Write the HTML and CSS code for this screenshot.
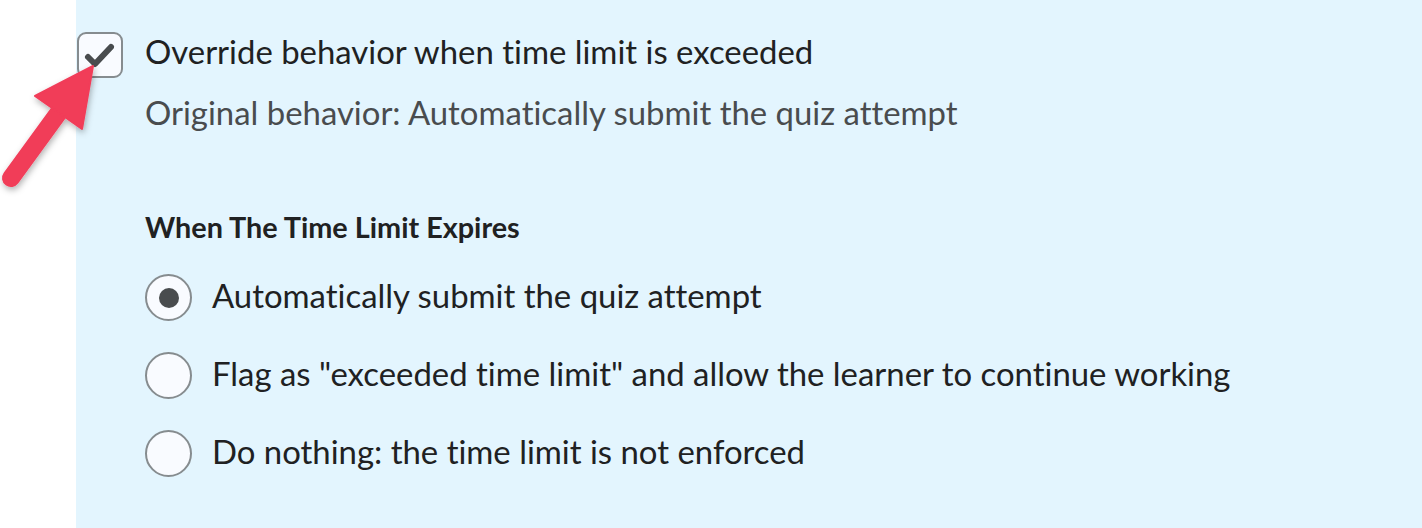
FILE: index.html
```html
<!DOCTYPE html>
<html>
<head>
<meta charset="utf-8">
<link rel="stylesheet" href="styles.css">
</head>
<body>
<div class="panel">
  <label class="check-row">
    <span class="checkbox">
      <svg viewBox="0 0 42 42" width="42" height="42"><path d="M9 23 L16 30 L32 13" fill="none" stroke="#494c4e" stroke-width="6" stroke-linecap="round" stroke-linejoin="round"/></svg>
    </span>
    <span class="check-label">Override behavior when time limit is exceeded</span>
  </label>
  <div class="original">Original behavior: Automatically submit the quiz attempt</div>
  <div class="heading">When The Time Limit Expires</div>
  <div class="radios">
    <label class="radio-row"><span class="radio checked"></span><span class="radio-label">Automatically submit the quiz attempt</span></label>
    <label class="radio-row"><span class="radio"></span><span class="radio-label">Flag as "exceeded time limit" and allow the learner to continue working</span></label>
    <label class="radio-row"><span class="radio"></span><span class="radio-label">Do nothing: the time limit is not enforced</span></label>
  </div>
</div>
<svg class="arrow" viewBox="0 0 120 200" width="120" height="200">
  <defs>
    <filter id="sh" x="-30%" y="-30%" width="160%" height="160%">
      <feDropShadow dx="1" dy="3" stdDeviation="3" flood-color="#000" flood-opacity="0.3"/>
    </filter>
  </defs>
  <g filter="url(#sh)" fill="#f13c59" stroke="#f13c59">
    <line x1="62" y1="108" x2="11" y2="178" stroke-width="18" stroke-linecap="round"/>
    <polygon points="93,66 35,96 82,129" stroke-width="2" stroke-linejoin="round"/>
  </g>
</svg>
</body>
</html>
```
FILE: styles.css
```css
html, body {
  margin: 0;
  padding: 0;
  background: #ffffff;
}
body {
  font-family: Lato, "Noto Sans", sans-serif;
  font-variant-ligatures: none;
  color: #202122;
  width: 1422px;
  height: 528px;
  overflow: hidden;
  position: relative;
}
.panel {
  margin-left: 76px;
  height: 528px;
  background: #e3f5fe;
  padding: 32px 0 0 1px;
  box-sizing: border-box;
}
.check-row {
  display: flex;
  align-items: center;
  gap: 22px;
}
.checkbox {
  width: 42px;
  height: 42px;
  border: 2px solid #868c8f;
  border-radius: 9px;
  background: #f9fbff;
  display: flex;
  align-items: center;
  justify-content: center;
  overflow: hidden;
  flex: none;
}
.checkbox svg {
  flex: none;
}
.check-label {
  font-size: 32.9px;
  line-height: 40px;
  margin-top: -6px;
}
.original {
  margin-left: 68px;
  margin-top: 15px;
  font-size: 32.9px;
  line-height: 40px;
  color: #494c4e;
}
.heading {
  margin-left: 68px;
  margin-top: 78px;
  font-size: 28.8px;
  font-weight: 700;
  line-height: 32px;
}
.radios {
  margin-left: 68px;
  margin-top: 31px;
  display: flex;
  flex-direction: column;
  gap: 31px;
}
.radio-row {
  display: flex;
  align-items: center;
  gap: 20px;
}
.radio {
  width: 43px;
  height: 43px;
  border: 2px solid #868c8f;
  border-radius: 50%;
  background: #f9fbff;
  display: flex;
  align-items: center;
  justify-content: center;
  flex: none;
}
.radio.checked::after {
  content: "";
  width: 20px;
  height: 20px;
  border-radius: 50%;
  background: #494c4e;
}
.radio-label {
  font-size: 32.9px;
  line-height: 40px;
  margin-top: -3px;
}
.arrow {
  position: absolute;
  left: 0;
  top: 0;
}
```
